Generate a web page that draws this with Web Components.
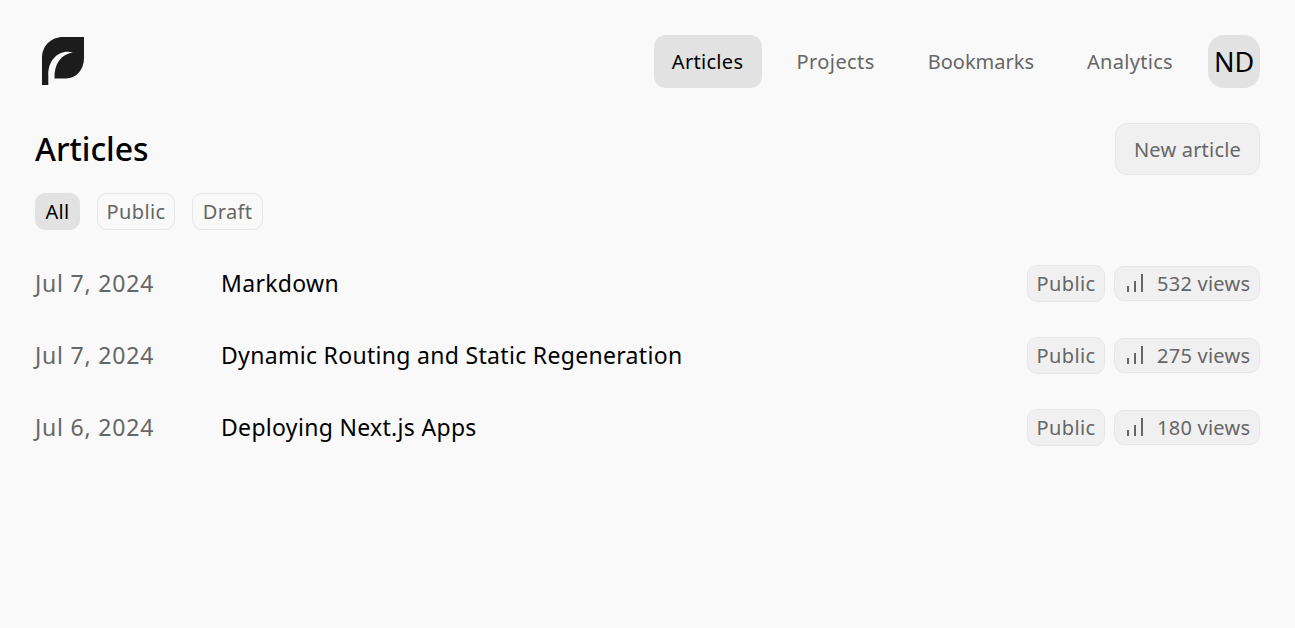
<!DOCTYPE html>
<html lang="en">
<head>
<meta charset="utf-8">
<title>Articles</title>
<style>
html,body{margin:0;background:#f9f9f9;}
body{font-family:"Noto Sans","Liberation Sans",sans-serif;color:#000;}
</style>
</head>
<body>
<app-shell>
  <app-header active="Articles"></app-header>
  <page-title>Articles</page-title>
  <filter-tabs></filter-tabs>
  <article-row date="Jul 7, 2024" name="Markdown" views="532"></article-row>
  <article-row date="Jul 7, 2024" name="Dynamic Routing and Static Regeneration" views="275"></article-row>
  <article-row date="Jul 6, 2024" name="Deploying Next.js Apps" views="180"></article-row>
</app-shell>

<script>
class AppShell extends HTMLElement {
  constructor(){
    super();
    this.attachShadow({mode:'open'});
    this.shadowRoot.innerHTML = `
      <style>
      :host{display:flex;flex-direction:column;padding:35px 35px 0;height:593px;}
      </style>
      <slot></slot>`;
  }
}

class AppHeader extends HTMLElement {
  constructor(){
    super();
    this.attachShadow({mode:'open'});
    this.shadowRoot.innerHTML = `
      <style>
      :host{display:flex;justify-content:space-between;align-items:center;height:53px;}
      .logo{display:block;width:42px;height:48px;margin:0 0 1px 7px;}
      nav{display:flex;align-items:center;gap:17px;}
      a{display:block;height:53px;line-height:53px;padding:0 18px;border-radius:12px;font-size:20px;color:#666;text-decoration:none;white-space:nowrap;}
      a.active{background:#e2e2e2;color:#000;width:72px;text-align:center;letter-spacing:.3px;}
      a.wide{letter-spacing:.4px;}
      a.mid{letter-spacing:.3px;}
      .links{display:flex;gap:17px;}
      .avatar{width:52px;height:53px;line-height:53px;text-align:center;border-radius:16px;background:#e2e2e2;color:#000;font-size:27px;}
      </style>
      <svg class="logo" viewBox="0 0 42 48"><path fill="#1c1c1c" d="M0 48V21C0 9 9 0 21 0H42V21C42 33 34 41.5 24 41.5H12.5C12 27 19 17 31 15.5C17 12 6 23 6.3 38V48Z"/></svg>
      <nav>
        <div class="links">
          <a class="active" href="#">Articles</a>
          <a class="wide" href="#">Projects</a>
          <a href="#">Bookmarks</a>
          <a class="mid" href="#">Analytics</a>
        </div>
        <div class="avatar">ND</div>
      </nav>`;
  }
}

class PageTitle extends HTMLElement {
  constructor(){
    super();
    this.attachShadow({mode:'open'});
    this.shadowRoot.innerHTML = `
      <style>
      :host{display:flex;justify-content:space-between;align-items:center;margin-top:35px;height:52px;}
      h1{margin:0;padding-bottom:2px;font-size:32px;font-weight:500;}
      button{height:52px;width:145px;padding:0;box-sizing:border-box;border:1px solid #e6e6e6;border-radius:12px;background:#f0f0f0;color:#666;font:inherit;font-size:20px;letter-spacing:.2px;}
      </style>
      <h1><slot></slot></h1>
      <button>New article</button>`;
  }
}

class FilterTabs extends HTMLElement {
  constructor(){
    super();
    this.attachShadow({mode:'open'});
    this.shadowRoot.innerHTML = `
      <style>
      :host{display:flex;gap:17px;margin-top:18px;margin-bottom:17px;}
      span{display:block;box-sizing:border-box;height:37px;line-height:35px;text-align:center;border:1px solid #e6e6e6;border-radius:10px;font-size:20px;color:#666;letter-spacing:.35px;}
      span.on{background:#e2e2e2;border-color:#e2e2e2;color:#000;width:45px;}
      .pub{width:78px;}
      .draft{width:71px;}
      </style>
      <span class="on">All</span><span class="pub">Public</span><span class="draft">Draft</span>`;
  }
}

class ArticleRow extends HTMLElement {
  constructor(){
    super();
    this.attachShadow({mode:'open'});
    this.shadowRoot.innerHTML = `
      <style>
      :host{display:flex;align-items:center;height:72px;font-size:23px;}
      .date{width:186px;flex:none;color:#666;letter-spacing:.8px;}
      .name{flex:1;color:#000;white-space:nowrap;letter-spacing:.31px;}
      .meta{display:flex;align-items:center;gap:9px;font-size:20px;color:#666;white-space:nowrap;}
      .pill{display:flex;align-items:center;justify-content:center;box-sizing:border-box;border:1px solid #e6e6e6;border-radius:10px;background:#f0f0f0;}
      .public{height:37px;width:78px;letter-spacing:.35px;}
      .views{height:35px;width:146px;padding:0 0 0 9px;justify-content:flex-start;letter-spacing:.25px;}
      svg{width:22px;height:22px;margin-right:11px;flex:none;}
      </style>
      <span class="date"></span>
      <span class="name"></span>
      <span class="meta">
        <span class="pill public">Public</span>
        <span class="pill views">
          <svg viewBox="0 0 22 22" fill="none" stroke="#666" stroke-width="2"><path d="M4 20V14M11 20V9M18 20V2"/></svg>
          <span class="count"></span>
        </span>
      </span>`;
  }
  connectedCallback(){
    this.shadowRoot.querySelector('.date').textContent = this.getAttribute('date');
    this.shadowRoot.querySelector('.name').textContent = this.getAttribute('name');
    this.shadowRoot.querySelector('.count').textContent = this.getAttribute('views') + ' views';
  }
}

customElements.define('app-shell', AppShell);
customElements.define('app-header', AppHeader);
customElements.define('page-title', PageTitle);
customElements.define('filter-tabs', FilterTabs);
customElements.define('article-row', ArticleRow);
</script>
</body>
</html>
